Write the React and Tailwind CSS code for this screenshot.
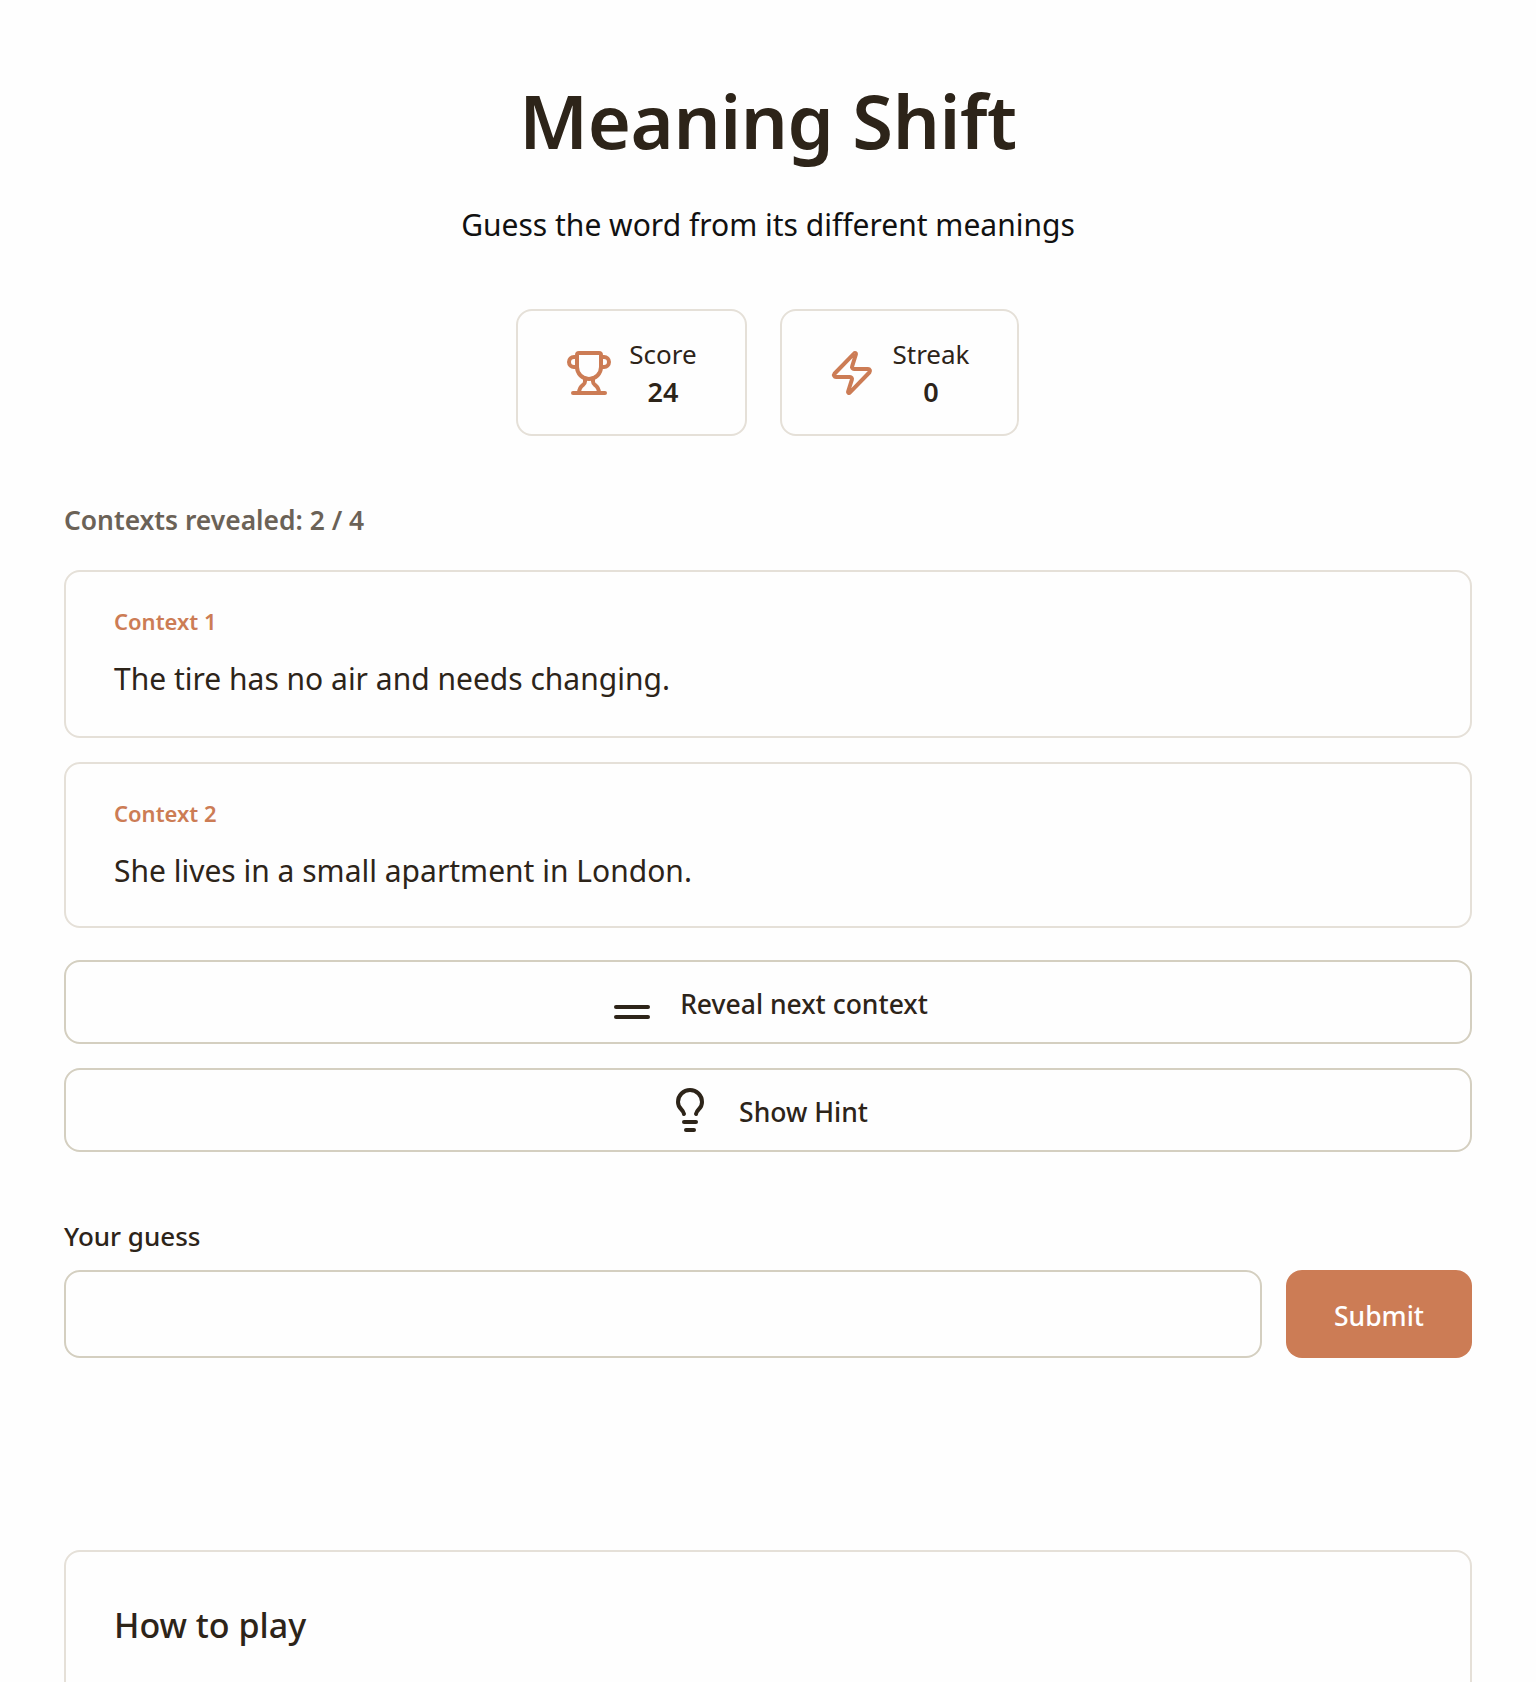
import React from "react";
import { Trophy, Zap, Lightbulb } from "lucide-react";

function Stat({ icon, label, value, wide }) {
  return (
    <div className={wide ? "flex h-[127px] w-[239px] items-center justify-center gap-4 rounded-2xl border-2 border-[#e5e0d8]" : "flex h-[127px] w-[231px] items-center justify-center gap-4 rounded-2xl border-2 border-[#e5e0d8]"}>
      {icon}
      <div className="flex flex-col items-center">
        <span className="text-[26px] leading-[36px] text-[#2d2419]">{label}</span>
        <span className="pt-px text-[27px] leading-[37px] font-semibold text-[#2d2419]">{value}</span>
      </div>
    </div>
  );
}

function Context({ label, text, tall }) {
  return (
    <div className={tall ? "flex h-[168px] flex-col rounded-2xl border-2 border-[#e5e0d8] px-[48px] pt-[34px]" : "flex h-[166px] flex-col rounded-2xl border-2 border-[#e5e0d8] px-[48px] pt-[34px]"}>
      <span className="text-[22px] leading-[30px] font-semibold text-[#cc7c55]">{label}</span>
      <span className="mt-[19px] text-[30px] leading-[48px] text-[#2d2419]">{text}</span>
    </div>
  );
}

function Bars() {
  return (
    <svg width="48" height="48" viewBox="0 0 48 48" fill="none" stroke="#2d2419" strokeWidth="4" strokeLinecap="round">
      <path d="M8 29h32" />
      <path d="M8 39h32" />
    </svg>
  );
}

export default function App() {
  return (
    <div className="h-[1682px] overflow-hidden bg-[#fefefe] px-16 pt-[74px] font-['Noto_Sans',sans-serif]">
      <h1 className="text-center text-[74px] leading-[94px] font-semibold tracking-[-0.4px] text-[#2d2419]">Meaning Shift</h1>
      <p className="mt-[33px] text-center text-[30px] leading-[48px] text-[#111]">Guess the word from its different meanings</p>
      <div className="mt-[60px] flex justify-center gap-[33px] pr-[2px]">
        <Stat icon={<Trophy size={48} color="#cc7c55" />} label="Score" value="24" />
        <Stat wide icon={<Zap size={48} color="#cc7c55" />} label="Streak" value="0" />
      </div>
      <p className="mt-[65px] text-[26.4px] leading-[38px] font-semibold text-[#6b6257]">Contexts revealed: 2 / 4</p>
      <div className="mt-[31px] flex flex-col gap-6">
        <Context tall label="Context 1" text="The tire has no air and needs changing." />
        <Context label="Context 2" text="She lives in a small apartment in London." />
      </div>
      <div className="mt-8 flex flex-col gap-6">
        <button className="flex h-[84px] items-center justify-center gap-6 rounded-2xl border-2 border-[#d4cfc0] text-[26.5px] font-medium text-[#2d2419]">
          <Bars />
          <span className="pt-[6px]">Reveal next context</span>
        </button>
        <button className="flex h-[84px] items-center justify-center gap-[25px] rounded-2xl border-2 border-[#d4cfc0] pr-[2px] text-[26.5px] font-medium text-[#2d2419]">
          <Lightbulb size={48} color="#2d2419" />
          <span className="pt-[6px]">Show Hint</span>
        </button>
      </div>
      <label className="mt-[65px] block text-[26px] leading-[38px] font-medium text-[#2d2419]">Your guess</label>
      <div className="mt-[15px] flex gap-6">
        <input className="h-[88px] flex-1 rounded-2xl border-2 border-[#d4cfc0] bg-transparent outline-none" />
        <button className="h-[88px] w-[186px] rounded-2xl bg-[#cc7c55] pt-[6px] text-[26.5px] font-medium text-white">Submit</button>
      </div>
      <div className="mt-[192px] h-[300px] rounded-2xl border-2 border-[#e5e0d8] px-[48px] pt-[45px]">
        <h2 className="text-[34px] leading-[56px] font-medium text-[#2d2419]">How to play</h2>
      </div>
    </div>
  );
}
